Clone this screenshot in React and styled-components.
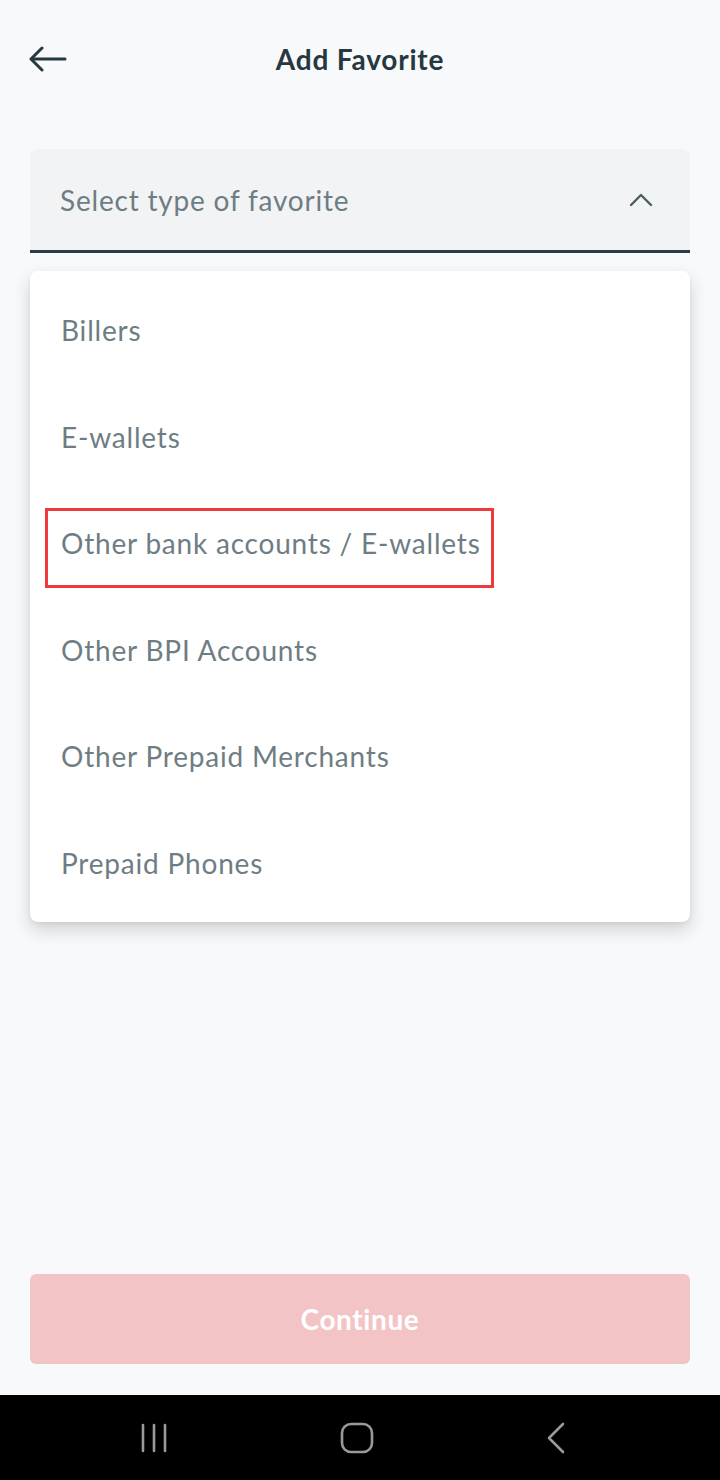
import React, { useState } from 'react'
import styled, { createGlobalStyle } from 'styled-components'

const GlobalStyle = createGlobalStyle`
body{
  margin: 0;
  background: #f8f9fa;
  font-family: Lato, "Open Sans", sans-serif;
}
`

const options = [
  'Billers',
  'E-wallets',
  'Other bank accounts / E-wallets',
  'Other BPI Accounts',
  'Other Prepaid Merchants',
  'Prepaid Phones',
]

function App() {
  const [open, setOpen] = useState(true)
  const marked = 'Other bank accounts / E-wallets'

  return (
    <Screen>
      <GlobalStyle />
      <Header>
        <BackButton aria-label="Back">
          <svg width="38" height="26" viewBox="0 0 38 26" fill="none" stroke="#263840" strokeWidth="3" strokeLinecap="round" strokeLinejoin="round">
            <path d="M36 13H3" />
            <path d="M13 2L2 13l11 11" />
          </svg>
        </BackButton>
        <Title>Add Favorite</Title>
      </Header>

      <Content>
        <SelectBox onClick={() => setOpen(!open)}>
          <Placeholder>Select type of favorite</Placeholder>
          <svg width="24" height="14" viewBox="0 0 24 14" fill="none" stroke="#4b5b62" strokeWidth="2.4" strokeLinecap="round" strokeLinejoin="round">
            <path d={open ? 'M2 12L12 2l10 10' : 'M2 2l10 10L22 2'} />
          </svg>
        </SelectBox>

        {open && (
          <Menu>
            {options.map((o) => (
              <Item key={o}>
                <ItemLabel marked={o === marked ? 1 : 0}>{o}</ItemLabel>
              </Item>
            ))}
          </Menu>
        )}
      </Content>

      <Footer>
        <ContinueButton disabled>Continue</ContinueButton>
      </Footer>

      <NavBar>
        <svg width="30" height="30" viewBox="0 0 30 30" fill="none" stroke="#9a9a9a" strokeWidth="2.6" strokeLinecap="round">
          <path d="M4 2v26M15 2v26M26 2v26" />
        </svg>
        <svg width="34" height="32" viewBox="0 0 34 32" fill="none" stroke="#9a9a9a" strokeWidth="2.6">
          <rect x="2" y="2" width="30" height="28" rx="9" />
        </svg>
        <svg width="22" height="32" viewBox="0 0 22 32" fill="none" stroke="#9a9a9a" strokeWidth="2.6" strokeLinecap="round" strokeLinejoin="round">
          <path d="M18 2L4 16l14 14" />
        </svg>
      </NavBar>
    </Screen>
  )
}

const Screen = styled.div`
min-height: 1480px;
display: flex;
flex-direction: column;
background: #f8f9fa;
`
const Header = styled.div`
height: 118px;
display: flex;
align-items: center;
justify-content: center;
position: relative;
`
const BackButton = styled.button`
position: absolute;
left: 29px;
top: 46px;
border: none;
background: none;
padding: 0;
cursor: pointer;
`
const Title = styled.h1`
margin: 0;
font-size: 28px;
letter-spacing: 0.8px;
font-weight: 700;
color: #263840;
`
const Content = styled.div`
flex: 1;
padding: 31px 30px 0 30px;
display: flex;
flex-direction: column;
gap: 18px;
`
const SelectBox = styled.div`
height: 101px;
background: #f1f3f5;
border-radius: 8px 8px 0 0;
border-bottom: 3px solid #2a3c45;
display: flex;
align-items: center;
justify-content: space-between;
padding: 0 37px 0 30px;
cursor: pointer;
`
const Placeholder = styled.span`
font-size: 28px;
letter-spacing: 0.8px;
color: #6e7d83;
`
const Menu = styled.div`
background: #ffffff;
border-radius: 8px;
box-shadow: 0 8px 18px rgba(0,0,0,0.16), 0 2px 4px rgba(0,0,0,0.05);
padding: 6px 0;
display: flex;
flex-direction: column;
`
const Item = styled.div`
height: 106.5px;
display: flex;
align-items: center;
padding: 0 31px;
cursor: pointer;
`
const ItemLabel = styled.span`
position: relative;
font-size: 28px;
letter-spacing: 0.8px;
color: #6e7d83;
${(p) => p.marked && `
&::after{
  content: '';
  position: absolute;
  left: -16px;
  right: -13px;
  top: -18px;
  bottom: -28px;
  border: 3px solid #f0393a;
}
`}
`
const Footer = styled.div`
padding: 0 30px 31px 30px;
`
const ContinueButton = styled.button`
width: 100%;
height: 90px;
border: none;
border-radius: 6px;
background: #f2c4c6;
color: #ffffff;
font-family: Lato, "Open Sans", sans-serif;
font-size: 28px;
letter-spacing: 0.6px;
font-weight: 700;
`
const NavBar = styled.div`
height: 85px;
background: #000000;
display: flex;
align-items: center;
justify-content: center;
gap: 171px;
padding-right: 14px;
`

export default App
